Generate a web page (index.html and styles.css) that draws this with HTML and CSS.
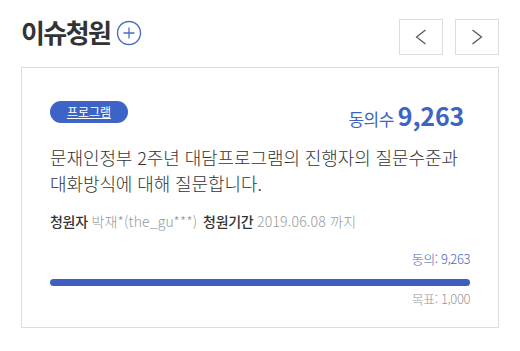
FILE: index.html
```html
<!DOCTYPE html>
<html lang="ko">
  <head>
    <meta charset="UTF-8" />
    <meta name="viewport" content="width=device-width, initial-scale=1.0" />
    <title>이슈청원</title>
    <link rel="stylesheet" href="styles.css">
  </head>
  <body>
    <div class="issue">
      <div class="issue-head">
        <h2 class="issue-title">
          이슈청원
          <a href="#" class="more">
            <svg width="26" height="26" viewBox="0 0 26 26">
              <circle cx="13" cy="13" r="11.5" fill="none" stroke="#4a6cc4" stroke-width="1.4" />
              <path d="M13 7.5v11M7.5 13h11" stroke="#4a6cc4" stroke-width="1.3" />
            </svg>
          </a>
        </h2>
        <!-- 좌우 버튼 -->
        <div class="nav">
          <button class="nav-btn">
            <svg width="12" height="16" viewBox="0 0 12 16"><path d="M10.5 1L1.5 8l9 7" fill="none" stroke="#555" stroke-width="1.2" /></svg>
          </button>
          <button class="nav-btn">
            <svg width="12" height="16" viewBox="0 0 12 16"><path d="M1.5 1l9 7-9 7" fill="none" stroke="#555" stroke-width="1.2" /></svg>
          </button>
        </div>
      </div>

      <div class="card">
        <div class="card-top">
          <a href="#" class="tag">프로그램</a>
          <p class="count">동의수 <strong>9,263</strong></p>
        </div>
        <p class="subject">문재인정부 2주년 대담프로그램의 진행자의 질문수준과<br>대화방식에 대해 질문합니다.</p>
        <p class="meta">
          <b>청원자</b> <span>박재*(the_gu***)</span>
          <b class="gap">청원기간</b> <span>2019.06.08 까지</span>
        </p>
        <p class="agree">동의: 9,263</p>
        <div class="bar"><div class="bar-fill" style="width: 100%"></div></div>
        <p class="goal">목표: 1,000</p>
      </div>
    </div>
  </body>
</html>
```

FILE: styles.css
```css
* {
  box-sizing: border-box;
}

body {
  margin: 0;
  background: #fff;
  font-family: "Noto Sans CJK KR", "Noto Sans", sans-serif;
  color: #333;
}

p,
h2 {
  margin: 0;
}

.issue {
  width: 520px;
  padding: 19px 21px 0;
}

.issue-head {
  display: flex;
  justify-content: space-between;
  align-items: flex-start;
}

.issue-title {
  display: flex;
  align-items: center;
  gap: 6px;
  margin-top: -1px;
  font-size: 26px;
  line-height: 28px;
  font-weight: 700;
  letter-spacing: -1.6px;
  color: #333;
}

.more {
  display: block;
  height: 26px;
  margin-top: 2px;
}

.nav {
  display: flex;
  gap: 12px;
}

.nav-btn {
  display: flex;
  align-items: center;
  justify-content: center;
  width: 44px;
  height: 36px;
  padding: 0;
  background: #fff;
  border: 1px solid #ddd;
  cursor: pointer;
}

.card {
  margin-top: 12px;
  padding: 33px 28px 19px;
  border: 1px solid #ddd;
}

.card-top {
  display: flex;
  justify-content: space-between;
  align-items: flex-start;
  height: 22px;
}

.tag {
  display: block;
  width: 78px;
  height: 22px;
  line-height: 22px;
  border-radius: 11px;
  background: #3e63c6;
  color: #fff;
  font-size: 12px;
  text-align: center;
  text-decoration: underline;
}

.count {
  margin-top: -1px;
  margin-right: 6px;
  color: #3e63c6;
  font-size: 17px;
  line-height: 30px;
  letter-spacing: -0.6px;
}

.count strong {
  font-size: 25px;
  font-weight: 700;
  letter-spacing: -0.2px;
}

.subject {
  margin-top: 21px;
  font-size: 18px;
  line-height: 26px;
  font-weight: 300;
  letter-spacing: -0.1px;
  color: #333;
}

.meta {
  margin-top: 15px;
  font-size: 14px;
  line-height: 20px;
  letter-spacing: -0.3px;
}

.meta b {
  font-weight: 500;
  color: #333;
}

.meta span {
  font-weight: 300;
  color: #999;
  letter-spacing: 0.2px;
}

.meta .gap {
  margin-left: 2px;
}

.agree,
.goal {
  text-align: right;
  font-size: 13px;
  line-height: 18px;
  font-weight: 300;
  letter-spacing: -0.4px;
}

.agree {
  margin-top: 19px;
  color: #4a69b8;
}

.bar {
  height: 7px;
  margin-top: 11px;
  border-radius: 4px;
  background: #e5e5e5;
}

.bar-fill {
  height: 100%;
  border-radius: 4px;
  background: #3e5fc0;
}

.goal {
  margin-top: 4px;
  color: #999;
}
```
